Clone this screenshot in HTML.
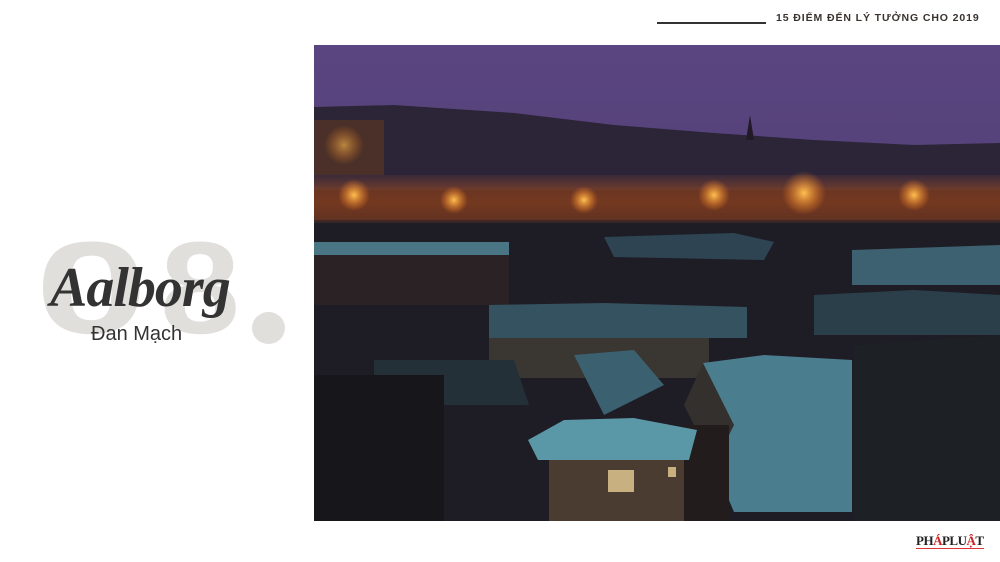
<!DOCTYPE html>
<html><head><meta charset="utf-8"><style>
html,body{margin:0;padding:0}
body{width:1000px;height:562px;background:#fff;position:relative;overflow:hidden;font-family:"Liberation Sans",sans-serif}
.hdr{position:absolute;left:776px;top:12px;font-size:10.5px;font-weight:bold;letter-spacing:0.9px;color:#3a3330;white-space:nowrap}
.line{position:absolute;left:657px;top:22px;width:109px;height:1.5px;background:#333}
.d{position:absolute;top:222px;font-size:131px;font-weight:bold;color:#e0dfdc;line-height:1;transform-origin:left}
.d0{left:35px;transform:scaleX(1.55)}
.d8{left:160px;transform:scaleX(1.1)}
.dot{position:absolute;left:252px;top:312px;width:33px;height:32px;border-radius:50%;background:#e0dfdc}
.name{position:absolute;left:50px;top:256px;font-family:"Liberation Serif",serif;font-style:italic;font-weight:bold;font-size:56px;color:#333;letter-spacing:-1px}
.sub{position:absolute;left:91px;top:323px;font-size:20px;color:#333}
.photo{position:absolute;left:314px;top:45px;width:686px;height:476px}
.logo{position:absolute;left:916px;top:534px;font-family:"Liberation Serif",serif;font-weight:bold;font-size:13px;color:#222;letter-spacing:-0.5px;border-bottom:1.5px solid #d33;line-height:14px}
.logo b{color:#c22}
</style></head><body>
<div class="line"></div>
<div class="hdr">15 ĐIỂM ĐẾN LÝ TƯỞNG CHO 2019</div>
<div class="d d0">0</div>
<div class="d d8">8</div>
<div class="dot"></div>
<div class="name">Aalborg</div>
<div class="sub">Đan Mạch</div>
<svg class="photo" viewBox="0 0 686 476" preserveAspectRatio="none">
<defs>
<linearGradient id="sky" x1="0" y1="0" x2="0" y2="1"><stop offset="0" stop-color="#5a4580"/><stop offset="1" stop-color="#4a3a6a"/></linearGradient>
<linearGradient id="lights" x1="0" y1="0" x2="0" y2="1"><stop offset="0" stop-color="#3a2a3a"/><stop offset=".55" stop-color="#9a4a20"/><stop offset="1" stop-color="#2a2028"/></linearGradient>
<radialGradient id="glow" cx=".5" cy=".5" r=".5"><stop offset="0" stop-color="#ffc050"/><stop offset="1" stop-color="#ff8020" stop-opacity="0"/></radialGradient>
</defs>
<rect width="686" height="476" fill="url(#sky)"/>
<polygon points="0,62 80,60 200,68 300,80 400,88 500,95 600,100 686,98 686,140 0,140" fill="#2c2538"/>
<rect x="0" y="75" width="70" height="60" fill="#4a3028"/>
<rect x="0" y="130" width="686" height="50" fill="url(#lights)"/>
<rect x="0" y="145" width="686" height="30" fill="#6a3420" opacity=".8"/>
<circle cx="490" cy="148" r="22" fill="url(#glow)"/>
<circle cx="400" cy="150" r="16" fill="url(#glow)"/>
<circle cx="40" cy="150" r="16" fill="url(#glow)"/>
<circle cx="600" cy="150" r="16" fill="url(#glow)"/>
<circle cx="270" cy="155" r="14" fill="url(#glow)"/>
<circle cx="140" cy="155" r="14" fill="url(#glow)"/>
<circle cx="30" cy="100" r="20" fill="url(#glow)" opacity=".6"/>
<polygon points="436,70 440,95 432,95" fill="#221a26"/>
<rect x="0" y="178" width="686" height="298" fill="#1e1c24"/>
<rect x="0" y="197" width="195" height="13" fill="#4a7585"/>
<rect x="0" y="210" width="195" height="50" fill="#2a2224"/>
<polygon points="538,205 686,200 686,240 538,240" fill="#3d6170"/>
<polygon points="290,192 420,188 460,197 450,215 300,212" fill="#2e4452"/>
<polygon points="175,260 290,258 433,262 433,293 175,293" fill="#34525f"/>
<rect x="175" y="293" width="220" height="40" fill="#3a3632"/>
<polygon points="500,250 600,245 686,250 686,290 500,290" fill="#2b3f4a"/>
<polygon points="60,315 200,315 215,360 60,360" fill="#243038"/>
<polygon points="260,310 320,305 350,340 290,370" fill="#3b6070"/>
<polygon points="389,318 450,310 538,315 538,467 420,467 400,420" fill="#4a7d8e"/>
<polygon points="389,318 420,380 400,420 370,360" fill="#33302e"/>
<rect x="370" y="380" width="45" height="96" fill="#221c1c"/>
<polygon points="214,395 250,375 320,373 383,385 375,415 224,415" fill="#5a98a8"/>
<rect x="235" y="415" width="135" height="61" fill="#4a3c30"/>
<rect x="294" y="425" width="26" height="22" fill="#c8b080"/>
<rect x="354" y="422" width="8" height="10" fill="#c8b080"/>
<rect x="0" y="330" width="130" height="146" fill="#17161a"/>
<polygon points="540,300 686,290 686,476 540,476" fill="#1c2226" opacity=".7"/>
</svg>
<div class="logo">PH<b>Á</b>PLU<b>Ậ</b>T</div>
</body></html>
